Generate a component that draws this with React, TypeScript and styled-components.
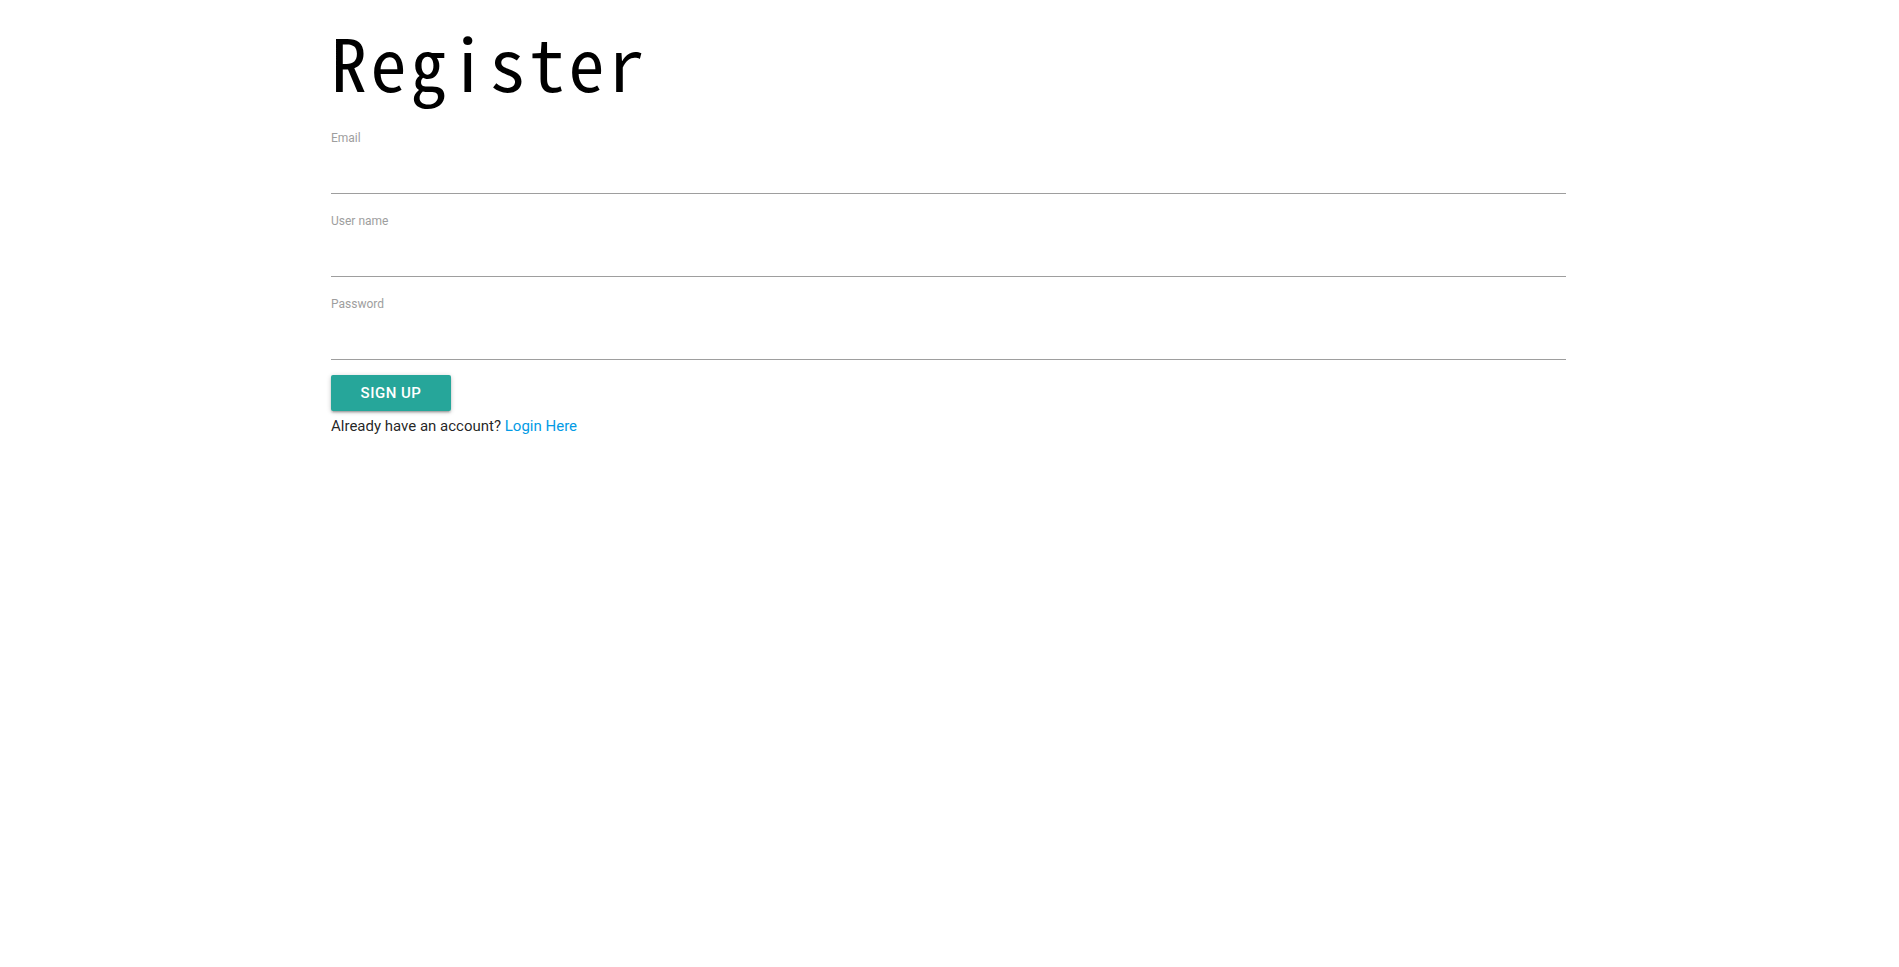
import React from "react";
import styled, { createGlobalStyle } from "styled-components";

const Global = createGlobalStyle`
  html, body { margin: 0; padding: 0; background: #fff; }
  body { font-family: Roboto, "Liberation Sans", sans-serif; color: rgba(0,0,0,0.87); }
  * { box-sizing: border-box; }
`;

const Container = styled.div`
  width: 1235px;
  margin: 0 auto 0 331px;
  display: flex;
  flex-direction: column;
`;

const Title = styled.h1`
  margin: 16px 0 0 0;
  font-family: "Noto Sans Mono CJK SC", "Noto Sans CJK SC", "DejaVu Sans Mono", monospace;
  font-weight: 400;
  font-size: 72px;
  letter-spacing: 3.6px;
  line-height: 90px;
  color: #000;
`;

const Form = styled.form`
  display: flex;
  flex-direction: column;
  margin-top: 24px;
`;

const Field = styled.div`
  display: flex;
  flex-direction: column;
  margin-bottom: 19px;
  &:last-of-type { margin-bottom: 15px; }
`;

const Label = styled.label`
  font-size: 12px;
  line-height: 16px;
  color: #9e9e9e;
`;

const Input = styled.input`
  height: 48px;
  border: none;
  border-bottom: 1px solid #9e9e9e;
  outline: none;
  background: transparent;
  font-size: 16px;
  font-family: inherit;
  padding: 0;
`;

const Button = styled.button`
  align-self: flex-start;
  width: 120px;
  height: 36px;
  border: none;
  border-radius: 2px;
  background: #26a69a;
  color: #fff;
  font-family: Roboto, sans-serif;
  font-weight: 500;
  font-size: 15px;
  letter-spacing: 0.5px;
  text-transform: uppercase;
  box-shadow: 0 2px 2px 0 rgba(0,0,0,0.14), 0 3px 1px -2px rgba(0,0,0,0.12), 0 1px 5px 0 rgba(0,0,0,0.2);
  cursor: pointer;
`;

const Note = styled.p`
  margin: 3px 0 0 0;
  font-size: 15px;
  line-height: 24px;
`;

const Link = styled.a`
  color: #039be5;
  text-decoration: none;
`;

export default function App() {
  return (
    <>
      <Global />
      <Container>
        <Title>Register</Title>
        <Form onSubmit={(e) => e.preventDefault()}>
          <Field>
            <Label htmlFor="email">Email</Label>
            <Input id="email" type="email" />
          </Field>
          <Field>
            <Label htmlFor="username">User name</Label>
            <Input id="username" type="text" />
          </Field>
          <Field>
            <Label htmlFor="password">Password</Label>
            <Input id="password" type="password" />
          </Field>
          <Button type="submit">Sign up</Button>
          <Note>
            Already have an account? <Link href="#">Login Here</Link>
          </Note>
        </Form>
      </Container>
    </>
  );
}
